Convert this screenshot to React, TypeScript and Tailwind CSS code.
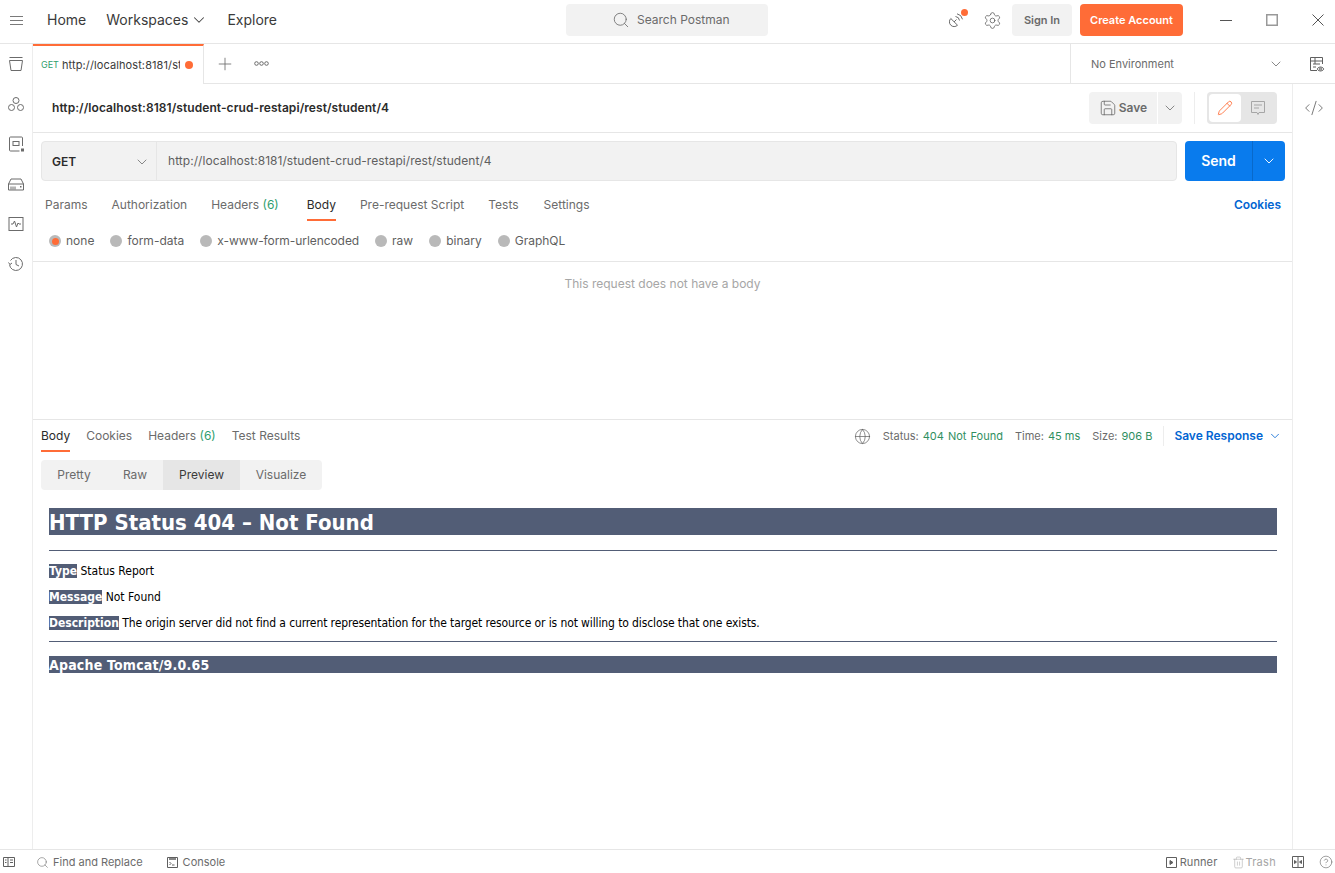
import { ChevronDown, Search, Settings, Plus, Save, Pencil, Globe, CodeXml, HelpCircle, Trash2 } from "lucide-react";

function Chev({ className = "text-[#6b6b6b]" }: { className?: string }) {
  return <ChevronDown size={16} strokeWidth={1.2} className={className} />;
}

function Radio({ label, active, tight }: { label: string; active?: boolean; tight?: boolean }) {
  return (
    <div className="flex items-center gap-[5px]">
      <span className="w-3 h-3 rounded-full bg-[#b9b9b9] flex items-center justify-center">
        {active && <span className="w-[7px] h-[7px] rounded-full bg-[#ff6c37]" />}
      </span>
      <span className={tight ? "text-xs text-[#5f5f5f] tracking-[-0.07px]" : "text-xs text-[#5f5f5f]"}>{label}</span>
    </div>
  );
}

function SideIcon({ children }: { children: React.ReactNode }) {
  return <div className="h-10 flex items-center justify-center">{children}</div>;
}

function Sidebar() {
  const stroke = { fill: "none", stroke: "#6b6b6b", strokeWidth: 1 };
  return (
    <div className="w-[33px] shrink-0 border-r border-[#ededed] flex flex-col">
      <SideIcon>
        <svg width="16" height="16" viewBox="0 0 16 16" {...stroke}>
          <path d="M1.5 1.5h13M1.5 4.5h13l-1.5 10H3z" />
        </svg>
      </SideIcon>
      <SideIcon>
        <svg width="16" height="16" viewBox="0 0 16 16" {...stroke}>
          <circle cx="8" cy="4.5" r="3" />
          <circle cx="3.5" cy="11.5" r="3" />
          <circle cx="12.5" cy="11.5" r="3" />
        </svg>
      </SideIcon>
      <SideIcon>
        <svg width="16" height="16" viewBox="0 0 16 16" {...stroke}>
          <path d="M14.5 10V2a1 1 0 0 0-1-1h-11a1 1 0 0 0-1 1v12a1 1 0 0 0 1 1h9" />
          <rect x="5" y="5.5" width="6" height="4" />
          <rect x="13" y="12.5" width="3" height="3" fill="#6b6b6b" stroke="none" />
        </svg>
      </SideIcon>
      <SideIcon>
        <svg width="16" height="16" viewBox="0 0 16 16" {...stroke}>
          <path d="M.5 8 3 3h10l2.500 5v6H.5zM.5 8h15M3 10.500v3M5 10.500v3M7 10.500v3" />
          <rect x="12" y="10" width="1.500" height="1.500" fill="#6b6b6b" stroke="none" />
        </svg>
      </SideIcon>
      <SideIcon>
        <svg width="16" height="16" viewBox="0 0 16 16" {...stroke}>
          <rect x="1" y="1.500" width="14" height="13" />
          <path d="M3 8h2l1.500-3 2 6L10 7l1 1h2" />
        </svg>
      </SideIcon>
      <SideIcon>
        <svg width="16" height="16" viewBox="0 0 16 16" {...stroke}>
          <path d="M2.500 4.500a6.500 6.500 0 1 1-1 4M.5 6.500l1.500 2 2-1.500M8 4v4.500l3 1.500" />
        </svg>
      </SideIcon>
    </div>
  );
}

function TitleBar() {
  return (
    <div className="h-[44px] shrink-0 border-b border-[#e6e6e6] flex items-center relative pb-[3px]">
      <div className="w-[33px] flex justify-center">
        <svg width="13" height="9" viewBox="0 0 13 9" fill="none" stroke="#7a7a7a" strokeWidth="1">
          <path d="M0 .5h13M0 4.500h13M0 8.500h13" />
        </svg>
      </div>
      <nav className="flex items-center ml-[14px] text-sm text-[#3a3a3a]">
        <span>Home</span>
        <span className="ml-5">Workspaces</span>
        <ChevronDown size={18} strokeWidth={1.4} className="ml-[2px] text-[#444]" />
        <span className="ml-[19px]">Explore</span>
      </nav>
      {/* search box sits in the centre of the bar */}
      <div className="absolute left-[566px] top-[4px] w-[202px] h-8 bg-[#f2f2f2] rounded flex items-center pl-[46px] gap-[7px] text-xs text-[#6b6b6b]">
        <Search size={18} strokeWidth={1.1} className="text-[#6b6b6b]" />
        <span>Search Postman</span>
      </div>
      <div className="ml-auto flex items-center">
        <div className="relative w-4 h-4 mr-[18px]">
          <svg width="16" height="16" viewBox="0 0 16 16" fill="none" stroke="#6b6b6b" strokeWidth="1">
            <path d="M1.800 6.500 8.500 13.200A4.700 4.700 0 0 1 1.800 6.500zM5 10l2.500-2.500M6.500 4.500a4.500 4.500 0 0 1 4 4M8 1.800a7 7 0 0 1 5.500 5.500" />
          </svg>
          <span className="absolute -top-[3px] -right-[3px] w-[7px] h-[7px] rounded-full bg-[#ff6c37]" />
        </div>
        <Settings size={19} strokeWidth={1} className="text-[#5f5f5f] mr-[10px]" />
        <div className="w-[60px] h-8 rounded bg-[#f2f2f2] flex items-center justify-center text-[11px] font-semibold text-[#6b6b6b]">
          Sign In
        </div>
        <div className="w-[103px] h-8 ml-2 rounded bg-[#ff6c37] flex items-center justify-center text-[11px] font-semibold text-white">
          Create Account
        </div>
        <div className="flex items-center ml-[37px] mr-[11px] gap-[34px]">
          <svg width="12" height="12" viewBox="0 0 12 12" fill="none" stroke="#555" strokeWidth="1">
            <path d="M0 6.500h12" />
          </svg>
          <svg width="12" height="12" viewBox="0 0 12 12" fill="none" stroke="#999" strokeWidth="1.500">
            <path d="M.75.75h10.500v10.500H.75z" />
          </svg>
          <svg width="12" height="12" viewBox="0 0 12 12" fill="none" stroke="#555" strokeWidth="1">
            <path d="m.5.500 11 11M11.500.500l-11 11" />
          </svg>
        </div>
      </div>
    </div>
  );
}

function TabRow() {
  return (
    <div className="h-10 shrink-0 border-b border-[#e6e6e6] flex items-stretch">
      <div className="w-[171px] h-10 border-t-2 border-t-[#ff6c37] border-r border-r-[#e6e6e6] bg-white flex items-center pl-2">
        <span className="text-[9px] text-[#2f9e6e] w-[21px]">GET</span>
        <span className="text-[11px] text-[#3a3a3a] w-[118px] overflow-hidden whitespace-nowrap tracking-[0.1px]">http://localhost:8181/student-crud-restapi</span>
        <span className="w-2 h-2 rounded-full bg-[#ff6c37] ml-[5px]" />
      </div>
      <div className="flex items-center ml-[11px]">
        <Plus size={20} strokeWidth={1} className="text-[#6b6b6b]" />
        <svg className="ml-[19px]" width="15" height="5" viewBox="0 0 15 5" fill="none" stroke="#6b6b6b" strokeWidth="1">
          <circle cx="2.500" cy="2.500" r="1.800" />
          <circle cx="7.500" cy="2.500" r="1.800" />
          <circle cx="12.500" cy="2.500" r="1.800" />
        </svg>
      </div>
      <div className="ml-auto w-[222px] border-l border-[#e6e6e6] flex items-center pl-5 pr-2 pt-[1px] justify-between">
        <span className="text-[11px] text-[#6b6b6b]">No Environment</span>
        <Chev />
      </div>
      <div className="w-[43px] flex items-center justify-center pl-[6px]">
        <svg width="16" height="16" viewBox="0 0 16 16" fill="none" stroke="#5f5f5f" strokeWidth="1">
          <path d="M8 14.500H1.500v-13h12V8M1.500 5h12M4 8h7M4 11h3M6 2v6" />
          <path d="M8 13s1.500-2 3.500-2 3.500 2 3.500 2-1.500 2-3.500 2S8 13 8 13z" />
          <circle cx="11.500" cy="13" r="1" />
        </svg>
      </div>
    </div>
  );
}

function RequestPane() {
  return (
    <div className="h-[336px] shrink-0 border-b border-[#e6e6e6] flex flex-col">
      <div className="h-[49px] shrink-0 border-b border-[#e6e6e6] flex items-center pl-[19px] pr-[15px]">
        <span className="text-xs font-semibold text-[#2b2b2b] tracking-[0.07px]">http://localhost:8181/student-crud-restapi/rest/student/4</span>
        <div className="ml-auto flex items-center">
          <div className="w-[68px] h-8 rounded-l bg-[#f2f2f2] flex items-center justify-center gap-[2px] text-xs font-semibold text-[#6b6b6b]">
            <Save size={18} strokeWidth={1} className="text-[#5f5f5f]" />
            <span>Save</span>
          </div>
          <div className="w-6 h-8 ml-[1px] rounded-r bg-[#f2f2f2] flex items-center justify-center">
            <Chev />
          </div>
          <div className="w-px h-8 bg-[#ededed] mx-3" />
          <div className="w-[70px] h-8 rounded bg-[#e6e6e6] flex items-center p-[2px]">
            <div className="w-8 h-7 rounded-sm bg-white flex items-center justify-center">
              <Pencil size={16} strokeWidth={1.3} className="text-[#ff6c37]" />
            </div>
            <div className="w-[34px] flex items-center justify-center">
              <svg width="14" height="14" viewBox="0 0 14 14" fill="none" stroke="#a6a6a6" strokeWidth="1">
                <path d="M.5.500h13v11H8l-1 2-1-2H.5zM3 4h8M3 7h5" />
              </svg>
            </div>
          </div>
        </div>
      </div>

      <div className="flex mt-2 pl-2 pr-[7px] gap-2">
        <div className="flex-1 h-10 rounded border border-[#e6e6e6] bg-[#f2f2f2] flex items-center">
          <div className="w-[115px] h-full border-r border-[#e6e6e6] flex items-center justify-between pl-[10px] pr-[6px] pt-[1px]">
            <span className="text-xs font-semibold text-[#2b2b2b]">GET</span>
            <Chev />
          </div>
          <span className="text-xs text-[#5f5f5f] ml-[11px] tracking-[0.05px]">http://localhost:8181/student-crud-restapi/rest/student/4</span>
        </div>
        <div className="w-[100px] h-10 rounded bg-[#097bed] flex items-center text-white">
          <span className="w-[67px] text-center text-sm font-semibold">Send</span>
          <span className="flex-1 h-full border-l border-[#0869ca] flex items-center justify-center">
            <ChevronDown size={16} strokeWidth={1.4} className="text-white" />
          </span>
        </div>
      </div>

      <div className="flex items-start h-[40px] mt-[1px] pl-3 pr-[11px] text-xs text-[#6b6b6b]">
        <span className="pt-[15px]">Params</span>
        <span className="pt-[15px] ml-6">Authorization</span>
        <span className="pt-[15px] ml-6">Headers <span className="text-[#2f9e6e]">(6)</span></span>
        <span className="pt-[15px] pb-[6px] ml-7 text-[#2b2b2b] border-b-2 border-[#ff6c37]">Body</span>
        <span className="pt-[15px] ml-6">Pre-request Script</span>
        <span className="pt-[15px] ml-6">Tests</span>
        <span className="pt-[15px] ml-[25px]">Settings</span>
        <span className="pt-[15px] ml-auto text-[#0265d2] font-semibold">Cookies</span>
      </div>

      <div className="flex items-center h-[40px] pl-4 pb-[1px] gap-4 border-b border-[#e6e6e6] shrink-0">
        <Radio label="none" active />
        <Radio label="form-data" />
        <Radio label="x-www-form-urlencoded" tight />
        <Radio label="raw" />
        <Radio label="binary" />
        <Radio label="GraphQL" />
      </div>

      <div className="text-center text-xs text-[#a6a6a6] pt-[14px]">This request does not have a body</div>
    </div>
  );
}

function ResponsePane() {
  const tomcat = "font-['DejaVu_Sans_Condensed','DejaVu_Sans',sans-serif]";
  return (
    <div className="flex-1 min-h-0 flex flex-col">
      <div className="h-[32px] shrink-0 flex items-start pl-2 pr-[10px] text-xs text-[#6b6b6b]">
        <span className="pt-2 pb-[6px] text-[#2b2b2b] border-b-2 border-[#ff6c37]">Body</span>
        <span className="pt-2 ml-4">Cookies</span>
        <span className="pt-2 ml-4">Headers <span className="text-[#2f9e6e]">(6)</span></span>
        <span className="pt-2 ml-4">Test Results</span>
        <div className="ml-auto flex items-center h-[32px] text-[11px]">
          <Globe size={17} strokeWidth={1} className="text-[#5f5f5f] mr-[12px]" />
          <span>Status:</span>
          <span className="ml-1 text-[#2f8f5f] [word-spacing:1px]">404 Not Found</span>
          <span className="ml-3">Time:</span>
          <span className="ml-1 text-[#2f8f5f]">45 ms</span>
          <span className="ml-3">Size:</span>
          <span className="ml-1 text-[#2f8f5f]">906 B</span>
          <span className="w-px h-5 bg-[#ededed] ml-[11px] mr-[10px]" />
          <span className="text-xs font-semibold text-[#0265d2]">Save Response</span>
          <ChevronDown size={14} strokeWidth={1.4} className="ml-[5px] text-[#0265d2]" />
        </div>
      </div>

      <div className="mt-2 ml-2 w-[281px] h-[30px] rounded bg-[#f2f2f2] flex items-center text-xs text-[#6b6b6b] shrink-0 overflow-hidden">
        <span className="w-[66px] text-center">Pretty</span>
        <span className="w-[56px] text-center">Raw</span>
        <span className="w-[77px] h-full bg-[#e6e6e6] text-[#3a3a3a] flex items-center justify-center">Preview</span>
        <span className="w-[82px] text-center">Visualize</span>
      </div>

      {/* rendered html from the server */}
      <div className={`mt-[18px] ml-4 mr-[15px] text-black ${tomcat}`}>
        <h1 className="h-[27px] bg-[#525d76] text-white text-[22px] font-bold leading-[29px] whitespace-nowrap">HTTP Status 404 – Not Found</h1>
        <div className="h-px bg-[#525d76] mt-[15px]" />
        <p className="text-xs leading-[14px] mt-[13px]"><b className="bg-[#525d76] text-white">Type</b> Status Report</p>
        <p className="text-xs leading-[14px] mt-[12px]"><b className="bg-[#525d76] text-white">Message</b> Not Found</p>
        <p className="text-xs leading-[14px] mt-[12px]"><b className="bg-[#525d76] text-white">Description</b> <span className="tracking-[-0.11px]">The origin server did not find a current representation for the target resource or is not willing to disclose that one exists.</span></p>
        <div className="h-px bg-[#525d76] mt-[11px]" />
        <h3 className="h-[17px] bg-[#525d76] text-white text-sm font-bold leading-[19px] tracking-[0.2px] mt-[14px]">Apache Tomcat/9.0.65</h3>
      </div>
    </div>
  );
}

function Footer() {
  return (
    <div className="h-6 shrink-0 border-t border-[#e6e6e6] flex items-center text-[11px] text-[#6b6b6b] pr-[2px] pt-[1px]">
      <svg className="ml-[3px]" width="12" height="12" viewBox="0 0 12 12" fill="none" stroke="#5f5f5f" strokeWidth="1">
        <path d="M.5 1.500h11v9H.5zM5 1.500v9M2 4h1.500M2 6.500h1.500M7 4h3M7 6.500h3" />
      </svg>
      <Search size={13} strokeWidth={1} className="ml-[21px] text-[#5f5f5f]" />
      <span className="ml-[4px]">Find and Replace</span>
      <svg className="ml-[24px]" width="11" height="11" viewBox="0 0 11 11" fill="none" stroke="#5f5f5f" strokeWidth="1">
        <path d="M.5.500h10v10H.5z" />
        <path d="M2 2h7" strokeWidth="1.500" />
        <path d="m2.500 5 1.500 1.500-1.500 1.500M5 8h2.500" />
      </svg>
      <span className="ml-[5px]">Console</span>
      <div className="ml-auto flex items-center">
        <svg width="11" height="11" viewBox="0 0 11 11" fill="none" stroke="#5f5f5f" strokeWidth="1">
          <path d="M.5.500h10v10H.5z" />
          <path d="M4 3.500 7 5.500 4 7.500z" fill="#5f5f5f" />
        </svg>
        <span className="ml-[3px] tracking-[0.1px]">Runner</span>
        <Trash2 size={13} strokeWidth={1} className="ml-[15px] text-[#a6a6a6]" />
        <span className="text-[#a6a6a6] tracking-[0.3px]">Trash</span>
        <svg className="ml-4" width="12" height="12" viewBox="0 0 12 12" fill="none" stroke="#5f5f5f" strokeWidth="1">
          <path d="M.5.500h11v11H.5zM6 .500v11" />
          <path d="M2.500 4.500 4.500 6l-2 1.500zM9.500 4.500 7.500 6l2 1.500z" fill="#5f5f5f" />
        </svg>
        <HelpCircle size={14} strokeWidth={1} className="ml-[15px] text-[#5f5f5f]" />
      </div>
    </div>
  );
}

export default function App() {
  return (
    <div className="h-[873px] w-[1335px] bg-white flex flex-col overflow-hidden font-['Inter',sans-serif]">
      <TitleBar />
      <div className="flex flex-1 min-h-0">
        <Sidebar />
        <div className="flex-1 min-w-0 flex flex-col">
          <TabRow />
          <div className="flex flex-1 min-h-0">
            <div className="flex-1 min-w-0 flex flex-col border-r border-[#ededed]">
              <RequestPane />
              <ResponsePane />
            </div>
            <div className="w-[42px] shrink-0 pt-[14px] flex justify-center h-fit">
              <CodeXml size={20} strokeWidth={1} className="text-[#5f5f5f]" />
            </div>
          </div>
        </div>
      </div>
      <Footer />
    </div>
  );
}
